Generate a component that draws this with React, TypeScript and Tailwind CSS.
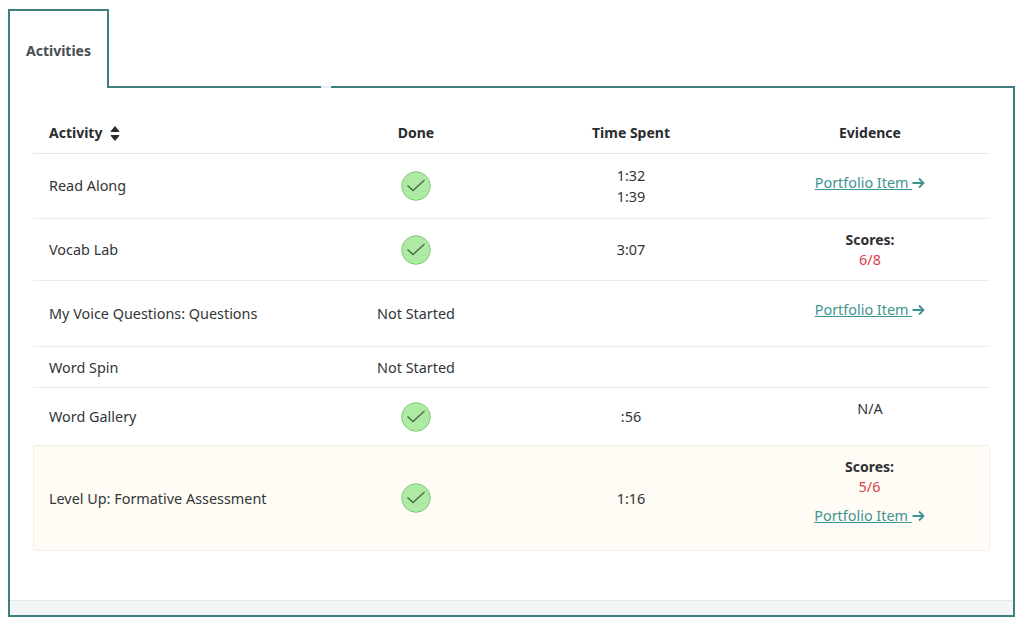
const font = "font-['Noto_Sans',sans-serif]";

function Check() {
  return (
    <svg width="30" height="30" viewBox="0 0 30 30" className="block mx-auto">
      <circle cx="15" cy="15" r="14.3" fill="#aeeaa4" stroke="#7fcb7c" strokeWidth="1" />
      <path d="M6.5 14.5 L12 19.5 L23.5 9" fill="none" stroke="#4f6b44" strokeWidth="1.4" />
    </svg>
  );
}

function Portfolio() {
  return (
    <a className="inline-flex items-center text-[14.4px] leading-[20px] text-[#3f9492]">
      <span className="underline whitespace-pre">Portfolio Item </span>
      <svg width="13" height="12" viewBox="0 0 13 12" className="block">
        <path d="M0.5 6 H11.5 M7 1.5 L11.5 6 L7 10.5" fill="none" stroke="#3f9492" strokeWidth="1.8" />
      </svg>
    </a>
  );
}

function Scores({ value }: { value: string }) {
  return (
    <div className="leading-[20px]">
      <div className="text-[14px] font-bold text-[#2f3033]">Scores:</div>
      <div className="text-[14.4px] text-[#d9444a]">{value}</div>
    </div>
  );
}

function Row({
  name,
  done,
  time,
  evidence,
  className = "",
  evidenceClass = "",
  columns = "grid-cols-[277px_212px_218px_250px]",
  namePad = "pl-4",
}: {
  name: string;
  done: React.ReactNode;
  time?: React.ReactNode;
  evidence?: React.ReactNode;
  className?: string;
  evidenceClass?: string;
  columns?: string;
  namePad?: string;
}) {
  return (
    <div className={`grid ${columns} items-center text-[14.4px] leading-[20px] text-[#333538] ${className}`}>
      <div className={namePad}>{name}</div>
      <div className="text-center">{done}</div>
      <div className="text-center">{time}</div>
      <div className={`text-center pl-[10px] ${evidenceClass}`}>{evidence}</div>
    </div>
  );
}

export default function App() {
  return (
    <div className={`${font} w-[1024px] h-[626px] bg-white pt-[9px] pl-2 overflow-hidden`}>
      <div className="flex w-[1007px] h-[79px]">
        <div className="w-[101px] border-2 border-b-0 border-[#3f7f80] pl-4 pt-[30px] text-[14px] leading-[20px] font-bold text-[#4a4d52]">
          Activities
        </div>
        <div className="flex-1 border-b-2 border-[#3f7f80] relative">
          <div className="absolute left-[212px] -bottom-[2px] w-[10px] h-[2px] bg-[#e6eeed]" />
        </div>
      </div>
      <div className="w-[1007px] h-[530px] border-2 border-t-0 border-[#3f7f80] flex flex-col -mt-px">
        <div className="flex-1 pl-[23px] pt-[26px]">
          <div className="w-[957px]">
            <div className="grid grid-cols-[277px_212px_218px_250px] items-center h-[41px] border-b border-[#e8e8e8] text-[14px] leading-[20px] font-bold text-[#2a2c30]">
              <div className="pl-4 flex items-center gap-2">
                Activity
                <svg width="10" height="17" viewBox="0 0 10 17" className="block">
                  <path d="M5 1.5 L9 6.5 H1 Z M1 10.5 H9 L5 15.5 Z" fill="#2a2c30" stroke="#2a2c30" strokeLinejoin="round" />
                </svg>
              </div>
              <div className="text-center">Done</div>
              <div className="text-center">Time Spent</div>
              <div className="text-center pl-[10px]">Evidence</div>
            </div>
            <Row
              className="h-[65px] border-b border-[#ececec]"
              name="Read Along"
              done={<Check />}
              time={<><div className="leading-[21px]">1:32</div><div className="leading-[21px]">1:39</div></>}
              evidence={<Portfolio />}
              evidenceClass="pb-[7px]"
            />
            <Row
              className="h-[62px] border-b border-[#ececec]"
              name="Vocab Lab"
              done={<Check />}
              time="3:07"
              evidence={<Scores value="6/8" />}
            />
            <Row
              className="h-[66px] border-b border-[#ececec]"
              name="My Voice Questions: Questions"
              done="Not Started"
              evidence={<Portfolio />}
              evidenceClass="pb-[7px]"
            />
            <Row
              className="h-[41px] pt-px border-b border-[#ececec]"
              name="Word Spin"
              done="Not Started"
            />
            <Row
              className="h-[57px]"
              name="Word Gallery"
              done={<Check />}
              time=":56"
              evidence="N/A"
              evidenceClass="pb-[16px]"
            />
            <Row
              className="h-[106px] bg-[#fffcf5] border border-[#f0eee8] rounded-[3px]"
              columns="grid-cols-[276px_212px_218px_249px]"
              namePad="pl-[15px] pt-px"
              name="Level Up: Formative Assessment"
              done={<Check />}
              time={<div className="pt-px">1:16</div>}
              evidence={<div className="flex flex-col items-center gap-[9px] pb-[14px]"><Scores value="5/6" /><Portfolio /></div>}
            />
          </div>
        </div>
        <div className="h-[15px] bg-[#f3f6f6] border-t border-[#e6e8e8]" />
      </div>
    </div>
  );
}
